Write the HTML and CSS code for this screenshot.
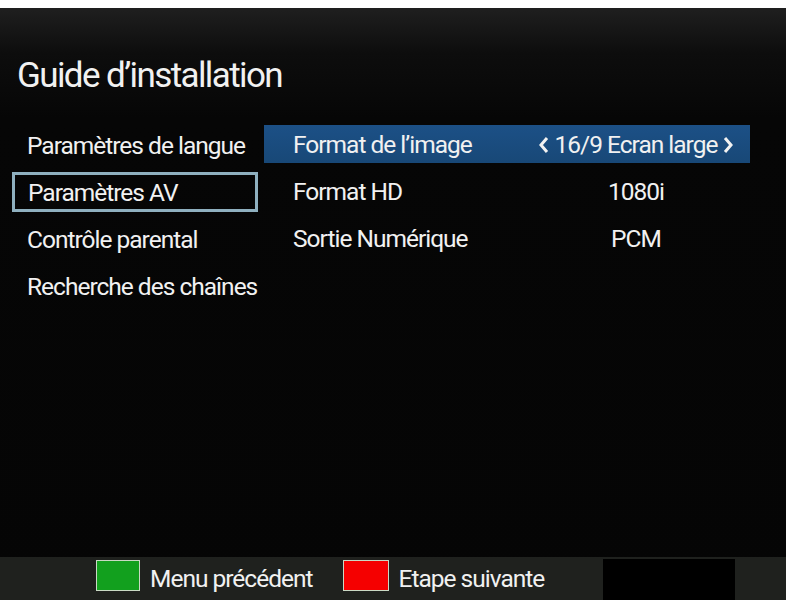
FILE: index.html
```html
<!DOCTYPE html>
<html lang="fr">
<head>
<meta charset="utf-8">
<title>Guide d'installation</title>
<link rel="stylesheet" href="styles.css">
</head>
<body>
<div class="screen">
  <h1 class="title">Guide d’installation</h1>
  <div class="content">
    <ul class="menu">
      <li class="menu-item">Paramètres de langue</li>
      <li class="menu-item is-focused">Paramètres AV</li>
      <li class="menu-item">Contrôle parental</li>
      <li class="menu-item">Recherche des chaînes</li>
    </ul>
    <div class="panel">
      <div class="row is-selected">
        <span class="label">Format de l’image</span>
        <span class="value">
          <svg class="chev" width="12" height="18" viewBox="0 0 12 18"><polyline points="9,2 3,9 9,16" fill="none" stroke="#f2f2f2" stroke-width="3"/></svg>16/9 Ecran large<svg class="chev" width="12" height="18" viewBox="0 0 12 18"><polyline points="3,2 9,9 3,16" fill="none" stroke="#f2f2f2" stroke-width="3"/></svg>
        </span>
      </div>
      <div class="row">
        <span class="label">Format HD</span>
        <span class="value">1080i</span>
      </div>
      <div class="row">
        <span class="label">Sortie Numérique</span>
        <span class="value">PCM</span>
      </div>
    </div>
  </div>
  <div class="footer">
    <span class="key key-green"></span>
    <span class="key-label">Menu précédent</span>
    <span class="key key-red"></span>
    <span class="key-label">Etape suivante</span>
    <span class="blank"></span>
  </div>
</div>
</body>
</html>
```
FILE: styles.css
```css
html, body {
  margin: 0;
  padding: 0;
  background: #ffffff;
}
body {
  font-family: Roboto, "Liberation Sans", sans-serif;
  color: #f1f1f1;
}
.screen {
  width: 786px;
  height: 592px;
  margin-top: 8px;
  background: linear-gradient(to bottom, #1f1f1f 0px, #0d0d0d 45px, #060606 110px, #050505 100%);
  display: flex;
  flex-direction: column;
  overflow: hidden;
}
.title {
  margin: 0;
  padding: 47px 0 0 17px;
  font-size: 35px;
  font-weight: normal;
  line-height: 42px;
  letter-spacing: -1.6px;
}
.content {
  display: flex;
  gap: 6px;
  padding-left: 12px;
  margin-top: 28px;
}
.menu {
  list-style: none;
  margin: 0;
  padding: 0;
  width: 246px;
  display: flex;
  flex-direction: column;
  gap: 7px;
}
.menu-item {
  height: 34px;
  line-height: 36px;
  border: 3px solid transparent;
  padding-left: 12px;
  font-size: 24.5px;
  letter-spacing: -1px;
  white-space: nowrap;
}
.menu-item.is-focused {
  border-color: #8fb0bf;
  padding-left: 13px;
}
.panel {
  width: 486px;
  display: flex;
  flex-direction: column;
  gap: 9px;
}
.row {
  display: flex;
  height: 38px;
  line-height: 40px;
  font-size: 24.5px;
  letter-spacing: -1px;
}
.row.is-selected {
  background: linear-gradient(to bottom, #1c5086, #184877);
}
.label {
  width: 229px;
  padding-left: 29px;
  white-space: nowrap;
}
.value {
  width: 228px;
  text-align: center;
  white-space: nowrap;
}
.chev {
  vertical-align: -1px;
  margin: 0 5px;
}
.footer {
  margin-top: auto;
  height: 43px;
  background: #1f211e;
  display: flex;
  align-items: flex-start;
  padding-left: 96px;
  font-size: 24.5px;
  letter-spacing: -1px;
}
.key {
  width: 42px;
  height: 29px;
  margin-top: 3px;
  border: 1px solid #c9d9c4;
}
.key-green {
  background: #12a01e;
}
.key-red {
  background: #f50000;
  margin-left: 30px;
  width: 44px;
}
.key-label {
  margin-left: 10px;
  line-height: 41px;
  margin-top: 1px;
}
.blank {
  width: 132px;
  height: 41px;
  margin-top: 2px;
  margin-left: auto;
  margin-right: 51px;
  background: #000000;
}
```
